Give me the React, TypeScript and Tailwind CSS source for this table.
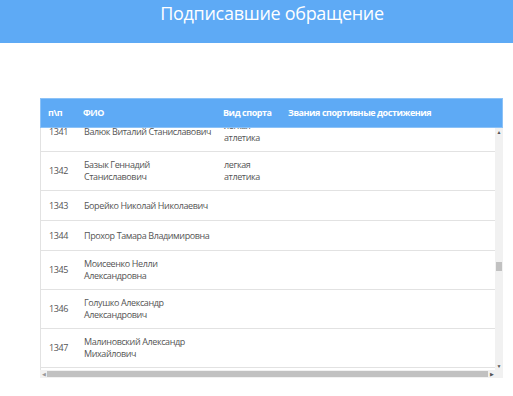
import React from "react";

// Signatories table, scrolled a bit into the list
const ROWS = [
  { n: "1341", name: ["Валюк Виталий Станиславович"], sport: ["легкая", "атлетика"] },
  { n: "1342", name: ["Базык Геннадий", "Станиславович"], sport: ["легкая", "атлетика"] },
  { n: "1343", name: ["Борейко Николай Николаевич"], sport: [] },
  { n: "1344", name: ["Прохор Тамара Владимировна"], sport: [] },
  { n: "1345", name: ["Моисеенко Нелли", "Александровна"], sport: [] },
  { n: "1346", name: ["Голушко Александр", "Александрович"], sport: [] },
  { n: "1347", name: ["Малиновский Александр", "Михайлович"], sport: [] },
  { n: "1348", name: ["Мельник Ирина", "Петровна"], sport: [] },
];

function Lines({ lines }: { lines: string[] }) {
  return (
    <div className="flex flex-col">
      {lines.map((l, i) => (
        <span key={i} className="whitespace-nowrap">{l}</span>
      ))}
    </div>
  );
}

export default function App() {
  return (
    <div className="min-h-screen bg-white font-['Open_Sans',sans-serif]">
      {/* Title band */}
      <div className="h-[43px] bg-[#5eaaf5] flex justify-center pl-[31px]">
        <h1 className="text-[18px] leading-[26px] tracking-[-0.3px] text-white">Подписавшие обращение</h1>
      </div>

      <div className="pt-[55px] pl-[40px] pr-[10px]">
        {/* Table header */}
        <div className="flex items-center h-[30px] bg-[#5eaaf5] border border-[#8cc2f7] text-white font-bold text-[9px] tracking-[-0.45px]">
          <div className="w-[35px] pl-[7px]">п\п</div>
          <div className="w-[140px] pl-[7px]">ФИО</div>
          <div className="w-[65px] pl-[7px] whitespace-nowrap">Вид спорта</div>
          <div className="flex-1 pl-[7px]">Звания спортивные достижения</div>
        </div>

        {/* Scrolling body */}
        <div className="flex h-[242px]">
          <div className="flex-1 overflow-hidden border-l border-[#e2e2e2] text-[9px] leading-[12px] tracking-[-0.4px] text-[#555]">
            <div className="-mt-[15px]">
              {ROWS.map((r) => (
                <div key={r.n} className="flex items-center min-h-[30px] py-[7px] border-b border-[#e2e2e2]">
                  <div className="w-[35px] pl-[8px]">{r.n}</div>
                  <div className="w-[140px] pl-[8px]"><Lines lines={r.name} /></div>
                  <div className="w-[65px] pl-[8px]"><Lines lines={r.sport} /></div>
                  <div className="flex-1" />
                </div>
              ))}
            </div>
          </div>
          {/* vertical scrollbar */}
          <div className="w-[8px] bg-[#f1f1f1] flex flex-col items-center">
            <span className="text-[5px] leading-[8px] text-[#555]">▲</span>
            <div className="h-[126px]" />
            <div className="w-[6px] h-[9px] bg-[#c1c1c1]" />
            <div className="flex-1" />
            <span className="text-[5px] leading-[8px] text-[#555]">▼</span>
          </div>
        </div>

        {/* horizontal scrollbar */}
        <div className="flex h-[8px]">
          <div className="flex-1 flex items-center bg-[#f1f1f1]">
            <span className="w-[7px] text-center text-[5px] leading-[8px] text-[#999]">◀</span>
            <div className="flex-1 h-[6px] bg-[#c1c1c1]" />
            <span className="w-[7px] text-center text-[5px] leading-[8px] text-[#555]">▶</span>
          </div>
          <div className="w-[8px] bg-[#f1f1f1]" />
        </div>
      </div>
    </div>
  );
}
